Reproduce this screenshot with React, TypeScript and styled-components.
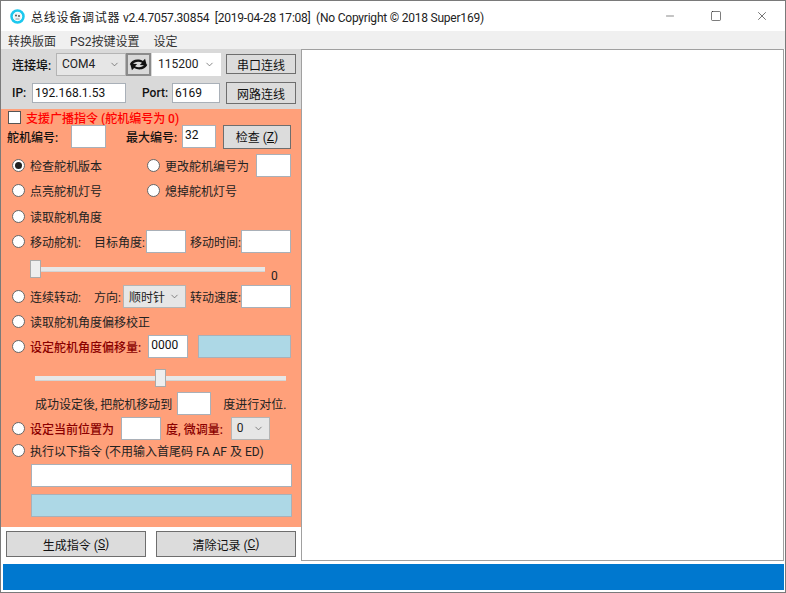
import React from 'react';
import styled, { createGlobalStyle } from 'styled-components';
import { ChevronDown, Minus, Square, X } from 'lucide-react';

const GlobalStyle = createGlobalStyle`
  html, body { margin: 0; padding: 0; background: #fff; }
  body { font-family: 'Roboto', 'Noto Sans CJK SC', sans-serif; font-size: 12px; color: #222; }
`;

const Window = styled.div`
  width: 786px;
  height: 593px;
  box-sizing: border-box;
  border: 1px solid #7a7a7a;
  display: flex;
  flex-direction: column;
  overflow: hidden;
  background: #fff;
`;

const TitleBar = styled.div`
  height: 30px;
  flex: none;
  display: flex;
  align-items: center;
  padding-left: 8px;
`;

const TitleText = styled.div`
  margin-left: 5px;
  font-size: 12px;
  white-space: pre;
  color: #222;
  flex: 1;
  letter-spacing: -0.22px;
`;

const TitleCjk = styled.span`
  letter-spacing: 0.75px;
`;

const WinButton = styled.div`
  width: 46px;
  height: 30px;
  display: flex;
  align-items: center;
  justify-content: center;
  color: #111;
`;

const MenuBar = styled.div`
  height: 18px;
  flex: none;
  background: #f0f0f0;
  display: flex;
  align-items: center;
  padding-left: 7px;
  gap: 14px;
  color: #333;
`;

const Body = styled.div`
  flex: 1;
  display: flex;
  min-height: 0;
`;

const LeftColumn = styled.div`
  width: 300px;
  flex: none;
  display: flex;
  flex-direction: column;
`;

const LogPane = styled.div`
  flex: 1;
  margin-right: 1px;
  height: 512px;
  box-sizing: border-box;
  border: 1px solid #a0a0a0;
  background: #fff;
`;

const ConnPanel = styled.div`
  height: 60px;
  flex: none;
  box-sizing: border-box;
  background: #d9d9d9;
  padding: 3px 4px 0 11px;
  display: flex;
  flex-direction: column;
  gap: 5px;
`;

const ConnRow = styled.div`
  display: flex;
  align-items: center;
  height: 24px;
`;

const BoldLabel = styled.span<{ $w?: number; $color?: string }>`
  font-weight: 500;
  white-space: nowrap;
  color: ${(p) => p.$color || '#111'};
  ${(p) => (p.$w ? `width: ${p.$w}px; flex: none;` : '')}
`;

const Label = styled.span<{ $w?: number }>`
  white-space: nowrap;
  ${(p) => (p.$w ? `width: ${p.$w}px; flex: none;` : '')}
`;

const Field = styled.div<{ $w: number; $h?: number; $ml?: number; $blue?: boolean }>`
  width: ${(p) => p.$w}px;
  height: ${(p) => p.$h || 23}px;
  margin-left: ${(p) => p.$ml || 0}px;
  flex: none;
  box-sizing: border-box;
  border: 1px solid #a9b0b8;
  background: ${(p) => (p.$blue ? '#add8e6' : '#fff')};
  padding: 0 2px;
  line-height: 18px;
  color: #111;
`;

const Select = styled.div<{ $w: number; $h?: number; $ml?: number; $white?: boolean }>`
  width: ${(p) => p.$w}px;
  height: ${(p) => p.$h || 23}px;
  margin-left: ${(p) => p.$ml || 0}px;
  flex: none;
  box-sizing: border-box;
  border: 1px solid ${(p) => (p.$white ? '#fff' : '#b4b4b4')};
  background: ${(p) => (p.$white ? '#fff' : '#e6e6e6')};
  padding: 0 5px;
  display: flex;
  align-items: center;
  justify-content: space-between;
  color: #222;
`;

const Button = styled.div<{ $w: number; $h: number; $ml?: number }>`
  width: ${(p) => p.$w}px;
  height: ${(p) => p.$h}px;
  margin-left: ${(p) => p.$ml || 0}px;
  flex: none;
  box-sizing: border-box;
  border: 1px solid #6e6e6e;
  background: #dcdcdc;
  display: flex;
  align-items: center;
  justify-content: center;
  color: #111;
  white-space: pre;
`;

const Key = styled.span`
  text-decoration: underline;
`;

const SwapButton = styled(Button)`
  background: #d9d9d9;
  border-width: 2px;
  border-color: #8a8a8a;
`;

const SalmonPanel = styled.div`
  height: 418px;
  flex: none;
  box-sizing: border-box;
  background: #ffa07a;
  padding: 1px 10px 0 6px;
  display: flex;
  flex-direction: column;
`;

const Row = styled.div<{ $h: number; $pl?: number; $pt?: number }>`
  height: ${(p) => p.$h}px;
  flex: none;
  box-sizing: border-box;
  display: flex;
  align-items: center;
  padding-left: ${(p) => p.$pl || 0}px;
  padding-top: ${(p) => p.$pt || 0}px;
`;

const CheckBox = styled.span`
  width: 13px;
  height: 13px;
  box-sizing: border-box;
  border: 1px solid #555;
  background: #fff;
  margin: 0 5px 0 1px;
  flex: none;
`;

const RadioDot = styled.span<{ $on?: boolean }>`
  width: 13px;
  height: 13px;
  box-sizing: border-box;
  border: 1px solid #666;
  border-radius: 50%;
  background: #fff;
  flex: none;
  margin: 0 5px;
  display: flex;
  align-items: center;
  justify-content: center;
  &::after {
    content: '';
    width: 7px;
    height: 7px;
    border-radius: 50%;
    background: ${(p) => (p.$on ? '#222' : 'transparent')};
  }
`;

const Option = styled.div<{ $w?: number }>`
  display: flex;
  align-items: center;
  white-space: nowrap;
  flex: none;
  ${(p) => (p.$w ? `width: ${p.$w}px;` : '')}
`;

const Spacer = styled.span`
  flex: 1;
`;

const Slider = styled.div<{ $w: number; $ml: number; $mt?: number }>`
  position: relative;
  width: ${(p) => p.$w}px;
  margin-left: ${(p) => p.$ml}px;
  margin-top: ${(p) => p.$mt || 0}px;
  height: 4px;
  flex: none;
  background: #e7e7e7;
  border-bottom: 1px solid #d4d4d4;
`;

const Thumb = styled.span`
  position: absolute;
  top: -7px;
  width: 11px;
  height: 18px;
  box-sizing: border-box;
  background: #eee;
  border: 1px solid #aaa;
`;

const ButtonBar = styled.div`
  flex: none;
  display: flex;
  padding: 4px 0 0 5px;
  gap: 10px;
`;

const StatusBar = styled.div`
  height: 26px;
  flex: none;
  margin: 2px 1px 2px 2px;
  background: #0078cf;
`;

const Chevron = () => <ChevronDown size={11} strokeWidth={1.5} color="#555" />;

export default function App() {
  return (
    <Window>
      <GlobalStyle />
      <TitleBar>
        <svg width="17" height="16" viewBox="0 0 16 16">
          <circle cx="8" cy="8.500" r="6" fill="none" stroke="#1cc8ee" strokeWidth="2.500" />
          <circle cx="8" cy="8.500" r="4" fill="#eef6f8" />
          <circle cx="6.500" cy="7.500" r="0.900" fill="#444" />
          <circle cx="9.500" cy="8" r="0.900" fill="#444" />
          <path d="M6 11h4" stroke="#999" strokeWidth="1" />
        </svg>
        <TitleText>
          <TitleCjk>总线设备调试器</TitleCjk> v2.4.7057.30854  [2019-04-28 17:08]  (No Copyright © 2018 Super169)
        </TitleText>
        <WinButton>
          <Minus size={12} strokeWidth={1} />
        </WinButton>
        <WinButton>
          <Square size={12} strokeWidth={1.1} />
        </WinButton>
        <WinButton>
          <X size={14} strokeWidth={1} />
        </WinButton>
      </TitleBar>
      <MenuBar>
        <span>转换版面</span>
        <span>PS2按键设置</span>
        <span>设定</span>
      </MenuBar>
      <Body>
        <LeftColumn>
          <ConnPanel>
            <ConnRow>
              <BoldLabel $w={44}>连接埠:</BoldLabel>
              <Select $w={70}>
                COM4
                <Chevron />
              </Select>
              <SwapButton $w={25} $h={23}>
                <svg width="21" height="15" viewBox="0 0 24 16">
                  <path d="M2 8c2-6 10-7 15-4l2.500-2.500 2 7.500-8-.5 2.500-2.500C12 4 7 5 5.500 8z" fill="#111" />
                  <path d="M22 8c-2 6-10 7-15 4l-2.500 2.500-2-7.500 8 .5-2.500 2.500c4 2 9 1 10.500-2z" fill="#111" />
                </svg>
              </SwapButton>
              <Select $w={69} $ml={1} $white>
                115200
                <Chevron />
              </Select>
              <Button $w={70} $h={20} $ml={5}>
                串口连线
              </Button>
            </ConnRow>
            <ConnRow>
              <BoldLabel $w={20}>IP:</BoldLabel>
              <Field $w={94} $h={20}>
                192.168.1.53
              </Field>
              <BoldLabel $w={30} style={{ marginLeft: 16 }}>
                Port:
              </BoldLabel>
              <Field $w={48} $h={20}>
                6169
              </Field>
              <Button $w={70} $h={22} $ml={6}>
                网路连线
              </Button>
            </ConnRow>
          </ConnPanel>
          <SalmonPanel>
            <Row $h={14}>
              <CheckBox />
              <BoldLabel $color="#ff0000">支援广播指令 (舵机编号为 0)</BoldLabel>
            </Row>
            <Row $h={25}>
              <BoldLabel $w={64}>舵机编号:</BoldLabel>
              <Field $w={35} $h={23} />
              <BoldLabel $w={56} style={{ marginLeft: 20 }}>
                最大编号:
              </BoldLabel>
              <Field $w={34} $h={23}>
                32
              </Field>
              <Button $w={68} $h={24} $ml={7}>
                检查 (<Key>Z</Key>)
              </Button>
            </Row>
            <Row $h={29} $pt={4}>
              <Option $w={135}>
                <RadioDot $on />
                检查舵机版本
              </Option>
              <Option>
                <RadioDot />
                更改舵机编号为
              </Option>
              <Spacer />
              <Field $w={35} />
            </Row>
            <Row $h={25}>
              <Option $w={135}>
                <RadioDot />
                点亮舵机灯号
              </Option>
              <Option>
                <RadioDot />
                熄掉舵机灯号
              </Option>
            </Row>
            <Row $h={26}>
              <Option>
                <RadioDot />
                读取舵机角度
              </Option>
            </Row>
            <Row $h={25}>
              <Option $w={87}>
                <RadioDot />
                移动舵机:
              </Option>
              <Label>目标角度:</Label>
              <Spacer />
              <Field $w={40} />
              <Label style={{ marginLeft: 4 }}>移动时间:</Label>
              <Field $w={50} />
            </Row>
            <Row $h={30}>
              <Slider $w={235} $ml={23}>
                <Thumb style={{ left: 0 }} />
              </Slider>
              <Label style={{ marginLeft: 6, marginTop: 13 }}>0</Label>
            </Row>
            <Row $h={25}>
              <Option $w={87}>
                <RadioDot />
                连续转动:
              </Option>
              <Label>方向:</Label>
              <Select $w={63} $ml={2}>
                顺时针
                <Chevron />
              </Select>
              <Label style={{ marginLeft: 4 }}>转动速度:</Label>
              <Field $w={50} />
            </Row>
            <Row $h={25}>
              <Option>
                <RadioDot />
                读取舵机角度偏移校正
              </Option>
            </Row>
            <Row $h={25}>
              <Option>
                <RadioDot />
                <BoldLabel $color="#8b0000">设定舵机角度偏移量:</BoldLabel>
              </Option>
              <Field $w={40} $ml={7}>
                0000
              </Field>
              <Spacer />
              <Field $w={93} $blue />
            </Row>
            <Row $h={31}>
              <Slider $w={251} $ml={28} $mt={8}>
                <Thumb style={{ left: 120 }} />
              </Slider>
            </Row>
            <Row $h={26} $pl={28}>
              <Label>成功设定後, 把舵机移动到</Label>
              <Field $w={34} $ml={5} />
              <Label style={{ marginLeft: 12 }}>度进行对位.</Label>
            </Row>
            <Row $h={24}>
              <Option $w={114}>
                <RadioDot />
                <BoldLabel $color="#8b0000">设定当前位置为</BoldLabel>
              </Option>
              <Field $w={40} />
              <BoldLabel $color="#8b0000" style={{ marginLeft: 5 }}>
                度, 微调量:
              </BoldLabel>
              <Select $w={39} $ml={8}>
                0
                <Chevron />
              </Select>
            </Row>
            <Row $h={21}>
              <Option>
                <RadioDot />
                执行以下指令 (不用输入首尾码 FA AF 及 ED)
              </Option>
            </Row>
            <Row $h={28} $pl={24}>
              <Field $w={261} />
            </Row>
            <Row $h={33} $pl={24}>
              <Field $w={261} $blue />
            </Row>
          </SalmonPanel>
          <ButtonBar>
            <Button $w={140} $h={26}>
              生成指令 (<Key>S</Key>)
            </Button>
            <Button $w={140} $h={26}>
              清除记录 (<Key>C</Key>)
            </Button>
          </ButtonBar>
        </LeftColumn>
        <LogPane />
      </Body>
      <StatusBar />
    </Window>
  );
}
